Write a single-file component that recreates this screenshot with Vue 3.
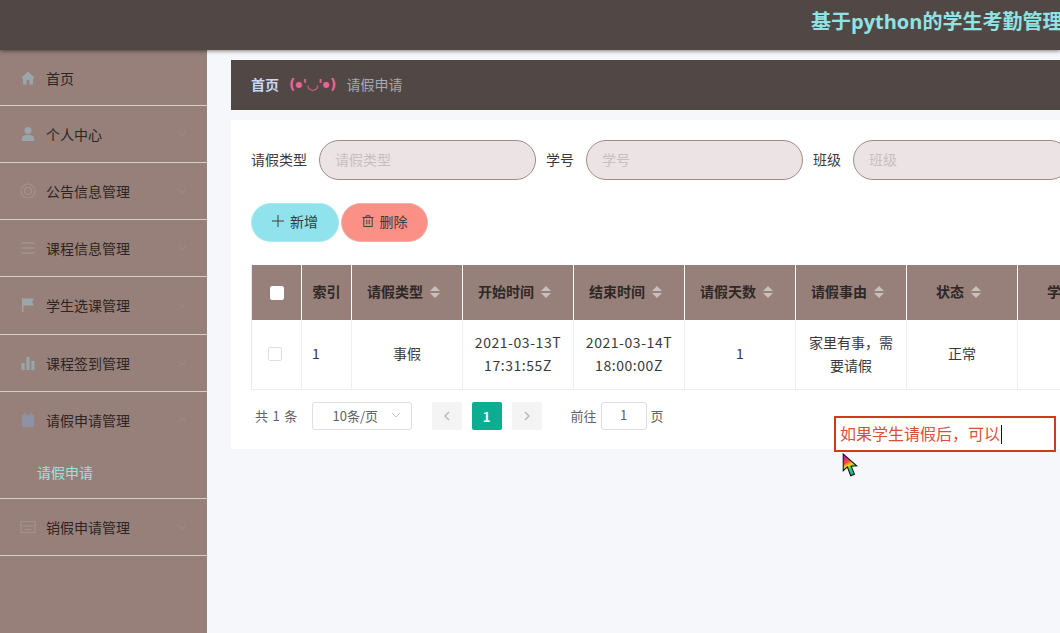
<template>
  <div class="page">
    <header class="top-bar">
      <div class="site-title">基于python的学生考勤管理系统</div>
    </header>
    <div class="body-row">
      <aside class="side-menu">
        <div v-for="item in menus" :key="item.name" class="menu-group">
          <div class="menu-item">
            <svg class="menu-icon" :class="item.tone" viewBox="0 0 16 16" v-html="item.icon"></svg>
            <span class="menu-name">{{ item.name }}</span>
            <svg v-if="item.arrow" class="menu-arrow" viewBox="0 0 10 6">
              <path :d="item.open ? 'M1 5l4-4 4 4' : 'M1 1l4 4 4-4'" />
            </svg>
          </div>
          <div v-if="item.child" class="menu-child">{{ item.child }}</div>
        </div>
      </aside>

      <main class="content">
        <div class="crumb">
          <span class="crumb-home">首页</span>
          <span class="crumb-face">(<span class="eye">●</span>'◡'<span class="eye">●</span>)</span>
          <span class="crumb-now">请假申请</span>
        </div>

        <section class="panel">
          <div class="search-row">
            <div v-for="f in filters" :key="f" class="search-field">
              <label>{{ f }}</label>
              <div class="pill-input">{{ f }}</div>
            </div>
          </div>

          <div class="btn-row">
            <button class="btn btn-add">
              <svg class="btn-icon" viewBox="0 0 12 12"><path d="M6 0v12M0 6h12" /></svg>
              新增
            </button>
            <button class="btn btn-del">
              <svg class="btn-icon" viewBox="0 0 12 12">
                <path d="M0.5 2.5h11M4 2.5V0.8h4v1.7M1.8 2.5v9h8.4v-9M4.8 4.8v4.4M7.2 4.8v4.4" />
              </svg>
              删除
            </button>
          </div>

          <div class="table-wrap">
            <div class="grid-table">
              <div class="th th-check"><span class="check check-head"></span></div>
              <div class="th">索引</div>
              <div v-for="c in columns" :key="c" class="th">
                {{ c }}
                <span class="sorter"><i class="up"></i><i class="down"></i></span>
              </div>
              <div class="th th-last">学号</div>

              <div class="td td-check"><span class="check check-row"></span></div>
              <div class="td td-left">1</div>
              <div class="td">事假</div>
              <div class="td td-date">2021-03-13T<br />17:31:55Z</div>
              <div class="td td-date">2021-03-14T<br />18:00:00Z</div>
              <div class="td">1</div>
              <div class="td">家里有事，需<br />要请假</div>
              <div class="td">正常</div>
              <div class="td td-last"></div>
            </div>
          </div>

          <div class="pager">
            <span class="pager-total">共 1 条</span>
            <div class="pager-size">
              <span>10条/页</span>
              <svg viewBox="0 0 10 6"><path d="M1 1l4 4 4-4" /></svg>
            </div>
            <span class="page-btn">
              <svg viewBox="0 0 6 10"><path d="M5 1L1 5l4 4" /></svg>
            </span>
            <span class="page-btn page-on">1</span>
            <span class="page-btn">
              <svg viewBox="0 0 6 10"><path d="M1 1l4 4-4 4" /></svg>
            </span>
            <span class="pager-goto">前往</span>
            <span class="pager-jump">1</span>
            <span class="pager-unit">页</span>
          </div>
        </section>
      </main>
    </div>

    <div class="note-box">如果学生请假后，可以<i class="caret"></i></div>
    <svg class="cursor" viewBox="0 0 15 24">
      <defs>
        <linearGradient id="rainbow" x1="0" y1="0" x2="0.35" y2="1">
          <stop offset="0" stop-color="#6a2fd0" />
          <stop offset="0.22" stop-color="#e0209a" />
          <stop offset="0.42" stop-color="#f0502a" />
          <stop offset="0.58" stop-color="#f5d020" />
          <stop offset="0.72" stop-color="#4fd060" />
          <stop offset="1" stop-color="#18b0a0" />
        </linearGradient>
      </defs>
      <path d="M1 1v16l4-3.6 3.2 8.400 3.600-1.500-3.200-7.600 5.400-.4z" fill="url(#rainbow)" stroke="#111" stroke-width="1" />
    </svg>
  </div>
</template>

<script setup>
const menus = [
  { name: '首页', tone: 'blue', icon: '<path fill="currentColor" d="M8 1.500L1 8h2v6.500h3.600V10h2.800v4.500H13V8h2z"/>' },
  { name: '个人中心', tone: 'blue', arrow: true, icon: '<circle fill="currentColor" cx="8" cy="4.500" r="3.500"/><path fill="currentColor" d="M2 15v-2.500C2 10 4.500 9 8 9s6 1 6 3.500V15z"/>' },
  { name: '公告信息管理', tone: 'grey', arrow: true, icon: '<g fill="none" stroke="currentColor" stroke-width="1.200"><circle cx="8" cy="8" r="7"/><circle cx="8" cy="8" r="3.500"/></g>' },
  { name: '课程信息管理', tone: 'grey', arrow: true, icon: '<path fill="none" stroke="currentColor" stroke-width="1.300" d="M1 3h14M1 8h14M1 13h14"/>' },
  { name: '学生选课管理', tone: 'blue', arrow: true, icon: '<path fill="currentColor" d="M2 1h1.400v14H2zM3.400 1.500H14l-2 3.500 2 3.500H3.400z"/>' },
  { name: '课程签到管理', tone: 'blue', arrow: true, icon: '<path fill="currentColor" d="M1.500 8h3.200v7H1.500zM6.400 2h3.200v13H6.400zM11.300 6h3.200v9h-3.200z"/>' },
  { name: '请假申请管理', tone: 'deep', arrow: true, open: true, child: '请假申请', icon: '<path fill="currentColor" d="M2 3h12v12H2zM4.500 1h1.500v3H4.500zM10 1h1.500v3H10z"/>' },
  { name: '销假申请管理', tone: 'grey', arrow: true, icon: '<path fill="none" stroke="currentColor" stroke-width="1.200" d="M1 2.500h14v11H1zM1 7h14M5 10.500h6"/>' }
]

const filters = ['请假类型', '学号', '班级']
const columns = ['请假类型', '开始时间', '结束时间', '请假天数', '请假事由', '状态']
</script>

<style>
html, body {
  margin: 0;
  height: 100%;
  overflow: hidden;
  background: #f6f7fa;
}
</style>

<style scoped>
.page {
  position: relative;
  width: 1060px;
  height: 633px;
  overflow: hidden;
  font-family: "Noto Sans CJK SC", "Liberation Sans", sans-serif;
  font-size: 14px;
  color: #333;
}

.top-bar {
  height: 50px;
  background: #514846;
  box-shadow: 0 1px 4px rgba(0, 0, 0, 0.5);
  position: relative;
  z-index: 2;
  white-space: nowrap;
}
.site-title {
  padding: 8px 0 0 811px;
  width: 400px;
  font-family: "Open Sans", "Noto Sans CJK SC", sans-serif;
  font-size: 20px;
  font-weight: 700;
  line-height: 27px;
  color: #8fe3e2;
}

.body-row {
  display: flex;
  height: 583px;
}

.side-menu {
  width: 207px;
  flex: none;
  background: #98807a;
}
.menu-group {
  border-bottom: 1px solid #d9cdc9;
}
.menu-item {
  display: flex;
  align-items: center;
  height: 56.14px;
  padding: 0 20px;
}
.menu-group:first-child .menu-item {
  height: 55px;
}
.menu-icon {
  width: 16px;
  height: 16px;
  margin-right: 10px;
  flex: none;
}
.menu-icon.blue { color: #9ba6ab; }
.menu-icon.grey { color: #a3928d; }
.menu-icon.deep { color: #8f91a4; }
.menu-name {
  flex: 1;
  color: #2c2523;
  line-height: 20px;
}
.menu-arrow {
  width: 10px;
  height: 6px;
  fill: none;
  stroke: #a08c86;
  stroke-width: 1;
}
.menu-child {
  height: 50px;
  padding-left: 37px;
  line-height: 48px;
  color: #93e5e4;
}

.content {
  flex: 1;
  min-width: 0;
  padding: 10px 0 0 24px;
}
.crumb {
  display: flex;
  align-items: center;
  height: 50px;
  width: 900px;
  padding: 0 0 2px 20px;
  box-sizing: border-box;
  background: #514846;
}
.crumb-home {
  color: #c9d7f2;
  font-weight: 700;
}
.crumb-face {
  margin: 0 10px;
  color: #e9649a;
  font-weight: 700;
  white-space: nowrap;
  font-family: "DejaVu Sans", "Noto Sans CJK SC", sans-serif;
  font-size: 14px;
  letter-spacing: 0.2px;
}
.eye {
  font-size: 8px;
  vertical-align: 2px;
}
.crumb-now {
  color: #a2a9b8;
}

.panel {
  width: 900px;
  height: 329px;
  margin-top: 10px;
  padding: 20px;
  box-sizing: border-box;
  background: #fff;
}
.search-row {
  display: flex;
  height: 40px;
  white-space: nowrap;
}
.search-field {
  display: flex;
  align-items: center;
  margin-right: 10px;
  flex: none;
}
.search-field label {
  margin: -2px 12px 0 0;
  color: #3a3a3a;
}
.pill-input {
  width: 217px;
  height: 40px;
  box-sizing: border-box;
  border: 1px solid #a08c87;
  border-radius: 20px;
  padding: 0 15px;
  line-height: 36px;
  background: #ece4e4;
  color: #c4c0c2;
}

.btn-row {
  display: flex;
  gap: 2px;
  margin-top: 23px;
}
.btn {
  display: flex;
  align-items: center;
  justify-content: center;
  height: 39px;
  padding: 0 0 3px;
  border: 1px solid #e4e0de;
  border-radius: 20px;
  font: inherit;
  color: #3a3a3a;
}
.btn-add {
  width: 88px;
  background: #90e2ec;
  border-color: #aee8ef;
}
.btn-del {
  width: 87px;
  background: #fb9086;
  border-color: #e8b3ac;
}
.btn-icon {
  width: 12px;
  height: 12px;
  margin-right: 6px;
  fill: none;
  stroke: #3f3f3f;
  stroke-width: 1;
}

.table-wrap {
  margin-top: 23px;
  width: 860px;
  overflow: hidden;
}
.grid-table {
  display: grid;
  grid-template-columns: 50px 50px repeat(7, 111px);
  grid-template-rows: 55px 69px;
  width: 879px;
  border-left: 1px solid #e8e8e8;
  border-bottom: 1px solid #ebeef5;
  box-sizing: border-box;
}
.th {
  display: flex;
  align-items: center;
  justify-content: center;
  padding-bottom: 3px;
  box-sizing: border-box;
  background: #98807a;
  border-right: 1px solid #fff;
  color: #2e2826;
  font-weight: 700;
  font-size: 14px;
  white-space: nowrap;
}
.th-check {
  padding-bottom: 0;
}
.th-last {
  justify-content: flex-start;
  padding-left: 29px;
}
.td {
  display: flex;
  align-items: center;
  justify-content: center;
  padding-bottom: 2px;
  box-sizing: border-box;
  text-align: center;
  border-right: 1px solid #ebeef5;
  color: #3a3a3a;
  line-height: 23px;
}
.td-check {
  padding-bottom: 1px;
}
.td-left {
  justify-content: flex-start;
  padding-left: 10px;
}
.td-date {
  letter-spacing: 0.55px;
}
.check {
  display: block;
  width: 14px;
  height: 14px;
  box-sizing: border-box;
  border: 1px solid #dcdfe6;
  border-radius: 2px;
  background: #fff;
}
.check-head {
  border-color: #fff;
}
.check-row {
  margin-right: 4px;
}
.sorter {
  display: inline-flex;
  flex-direction: column;
  align-items: center;
  gap: 2px;
  width: 24px;
  margin-top: 1px;
}
.sorter i {
  display: block;
  width: 0;
  height: 0;
  border-left: 5px solid transparent;
  border-right: 5px solid transparent;
}
.sorter .up { border-bottom: 5px solid #c7c0bd; }
.sorter .down { border-top: 5px solid #c7c0bd; }

.pager {
  display: flex;
  align-items: center;
  height: 30px;
  margin-top: 11px;
  padding-left: 4px;
  font-size: 13px;
  color: #606266;
  white-space: nowrap;
}
.pager-total {
  word-spacing: 1px;
  letter-spacing: 0.3px;
  margin-top: -2px;
}
.pager-size {
  display: flex;
  align-items: center;
  justify-content: space-between;
  width: 100px;
  height: 28px;
  margin: 0 20px 0 14px;
  padding: 0 10px 2px 20px;
  box-sizing: border-box;
  border: 1px solid #dcdfe6;
  border-radius: 3px;
}
.pager-size svg {
  width: 10px;
  height: 6px;
  fill: none;
  stroke: #c0c4cc;
}
.page-btn {
  display: flex;
  align-items: center;
  justify-content: center;
  width: 30px;
  height: 28px;
  margin-right: 10px;
  border-radius: 2px;
  background: #f4f4f5;
}
.page-btn svg {
  width: 6px;
  height: 10px;
  fill: none;
  stroke: #b4b6ba;
  stroke-width: 1.400;
}
.page-on {
  background: #0cae92;
  color: #fff;
  font-weight: 700;
}
.pager-goto {
  margin: -2px 0 0 19px;
}
.pager-unit {
  margin-top: -2px;
}
.pager-jump {
  width: 46px;
  height: 28px;
  margin: 0 4px;
  box-sizing: border-box;
  border: 1px solid #dcdfe6;
  border-radius: 3px;
  text-align: center;
  line-height: 24px;
}

.note-box {
  position: absolute;
  left: 834px;
  top: 416px;
  width: 222px;
  height: 36px;
  box-sizing: border-box;
  border: 2px solid #d03a1c;
  padding-left: 4px;
  line-height: 31px;
  font-size: 16px;
  color: #d9503a;
  background: #fff;
  white-space: nowrap;
}
.caret {
  display: inline-block;
  width: 1px;
  height: 19px;
  margin-left: 1px;
  vertical-align: -4px;
  background: #111;
}
.cursor {
  position: absolute;
  left: 842px;
  top: 453px;
  width: 16px;
  height: 25px;
}
</style>
